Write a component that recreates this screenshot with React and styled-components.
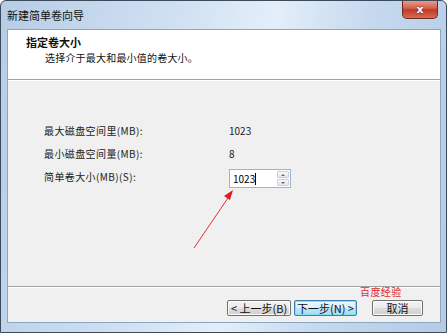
import styled, { createGlobalStyle } from 'styled-components';

const GlobalStyle = createGlobalStyle`
	html, body {
		margin: 0;
		padding: 0;
		background: #ffffff;
	}
	body {
		font-family: "Noto Sans CJK SC", "DejaVu Sans", sans-serif;
	}
`;

const Window = styled.div`
	position: relative;
	box-sizing: border-box;
	width: 447px;
	height: 333px;
	display: flex;
	flex-direction: column;
	border: 1px solid #3c4a5c;
	border-radius: 6px 6px 0 0;
	background: linear-gradient(100deg, #b7cde6 0%, #cfe0f2 35%, #e3eef9 55%, #c4d8ee 75%, #b5cbe4 100%);
	overflow: hidden;
`;

const TitleBar = styled.div`
	height: 28px;
	display: flex;
	align-items: center;
	justify-content: space-between;
	padding: 0 8px 0 6px;
	font-size: 11px;
	color: #111;
`;

const CloseButton = styled.div`
	align-self: flex-start;
	width: 36px;
	height: 19px;
	margin-top: -1px;
	box-sizing: border-box;
	border: 1px solid #6b2a22;
	border-top: none;
	border-radius: 0 0 5px 5px;
	background: linear-gradient(180deg, #e8a292 0%, #d4624d 45%, #c0392b 55%, #d76c4f 100%);
	display: flex;
	align-items: center;
	justify-content: center;
	color: #fff;
	font-family: "DejaVu Sans", sans-serif;
	font-size: 11px;
	font-weight: 700;
	text-shadow: 0 0 2px #5a1a12;
`;

const Client = styled.div`
	flex: 1;
	display: flex;
	flex-direction: column;
	margin: 0 5px 9px 6px;
	border: 1px solid #8ea5c0;
	background: #f0f0f0;
`;

const Header = styled.div`
	height: 50px;
	box-sizing: border-box;
	background: #ffffff;
	border-bottom: 1px solid #a0a0a0;
	box-shadow: 0 1px 0 #ffffff;
	padding: 5px 0 0 18px;
	display: flex;
	flex-direction: column;
	gap: 2px;
	color: #111;
`;

const HeaderTitle = styled.div`
	font-weight: 700;
	font-size: 11px;
	line-height: 14px;
`;

const HeaderSub = styled.div`
	padding-left: 19px;
	font-size: 10px;
	line-height: 13px;
	letter-spacing: 0.2px;
`;

const Body = styled.div`
	flex: 1;
	display: grid;
	grid-template-columns: 185px auto;
	grid-auto-rows: 23px;
	align-content: start;
	align-items: center;
	padding: 39px 0 0 36px;
	font-size: 10px;
	color: #222;
	border-bottom: 1px solid #a0a0a0;
	box-shadow: 0 1px 0 #ffffff;
`;

const Label = styled.div`
	letter-spacing: 0.4px;
`;

const Value = styled.div`
	font-size: 10px;
`;

const SpinBox = styled.div`
	display: flex;
	width: 62px;
	height: 19px;
	box-sizing: border-box;
	border: 1px solid #9fb4cb;
	background: #fff;
	margin-top: 4px;
`;

const SpinInput = styled.div`
	flex: 1;
	display: flex;
	align-items: center;
	padding-left: 3px;
	font-size: 10px;
	color: #000;
`;

const Caret = styled.span`
	display: inline-block;
	width: 1px;
	height: 12px;
	background: #000;
`;

const Spinner = styled.div`
	width: 12px;
	display: flex;
	flex-direction: column;
	gap: 1px;
	padding: 1px;
`;

const SpinHalf = styled.div`
	flex: 1;
	display: flex;
	align-items: center;
	justify-content: center;
	border: 1px solid #c9d2dc;
	border-radius: 1px;
	background: linear-gradient(180deg, #f6f8fa, #e2e7ec);

	&::after {
		content: '';
		border-left: 2px solid transparent;
		border-right: 2px solid transparent;
		${(p) => (p.$up ? 'border-bottom: 2px solid #5b6b7d;' : 'border-top: 2px solid #5b6b7d;')}
	}
`;

const Footer = styled.div`
	height: 35px;
	display: flex;
	align-items: flex-start;
	padding: 13px 0 0 219px;
	box-sizing: border-box;
`;

const Button = styled.div`
	box-sizing: border-box;
	width: ${(p) => p.$w}px;
	height: 16px;
	margin-right: ${(p) => p.$gap || 0}px;
	display: flex;
	align-items: center;
	justify-content: center;
	font-size: 11px;
	line-height: 12px;
	color: #111;
	border: 1px solid ${(p) => (p.$focus ? '#3c7fb1' : '#707070')};
	border-radius: 2px;
	background: ${(p) =>
		p.$focus
			? 'linear-gradient(180deg, #eaf6fd 0%, #d9f0fc 50%, #bee6fd 51%, #a7d9f5 100%)'
			: 'linear-gradient(180deg, #f2f2f2 0%, #ebebeb 50%, #dddddd 51%, #cfcfcf 100%)'};
	box-shadow: inset 0 0 0 1px ${(p) => (p.$focus ? '#7ee0f5' : '#fbfbfb')};
	white-space: nowrap;
`;

const Watermark = styled.div`
	position: absolute;
	left: 359px;
	top: 285px;
	font-size: 10px;
	line-height: 12px;
	color: #e02a2a;
	letter-spacing: 0.4px;
`;

const Arrow = styled.svg`
	position: absolute;
	left: 185px;
	top: 182px;
	overflow: visible;
`;

const App = () => {
	return (
		<>
			<GlobalStyle />
			<Window>
				<TitleBar>
					<span>新建简单卷向导</span>
					<CloseButton>x</CloseButton>
				</TitleBar>
				<Client>
					<Header>
						<HeaderTitle>指定卷大小</HeaderTitle>
						<HeaderSub>选择介于最大和最小值的卷大小。</HeaderSub>
					</Header>
					<Body>
						<Label>最大磁盘空间里(MB):</Label>
						<Value>1023</Value>
						<Label>最小磁盘空间量(MB):</Label>
						<Value>8</Value>
						<Label>简单卷大小(MB)(S):</Label>
						<SpinBox>
							<SpinInput>
								1023<Caret />
							</SpinInput>
							<Spinner>
								<SpinHalf $up />
								<SpinHalf />
							</Spinner>
						</SpinBox>
					</Body>
					<Footer>
						<Button $w={64} $gap={3}>&lt; 上一步(B)</Button>
						<Button $w={63} $gap={15} $focus>下一步(N) &gt;</Button>
						<Button $w={51}>取消</Button>
					</Footer>
				</Client>
				<Watermark>百度经验</Watermark>
				<Arrow width="60" height="70" viewBox="0 0 60 70">
					<line x1="8" y1="65" x2="44" y2="12" stroke="#e03030" strokeWidth="1" />
					<polygon points="47,7 38,13 44,17" fill="#d81e1e" />
				</Arrow>
			</Window>
		</>
	);
};

export default App;
